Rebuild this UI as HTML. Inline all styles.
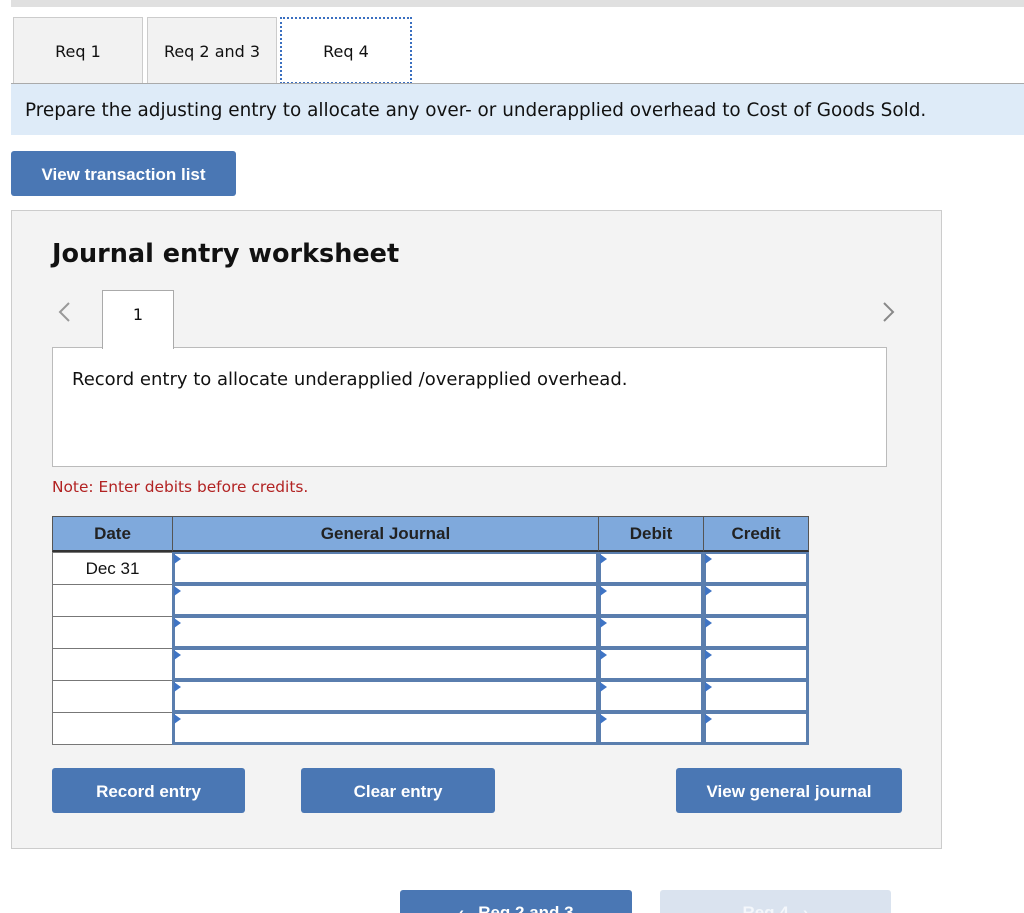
<!DOCTYPE html>
<html><head><meta charset="utf-8"><style>
*{box-sizing:border-box;margin:0;padding:0}
html,body{width:1024px;height:913px;overflow:hidden}
body{background:#fff;position:relative;font-family:"DejaVu Sans","Liberation Sans",sans-serif;color:#111}
.a{position:absolute}
.tab{position:absolute;top:17px;height:66px;width:130px;background:#f2f2f2;border:1px solid #ccc;border-bottom:none;font-size:16px;display:flex;align-items:center;justify-content:center;padding-top:2px}
.btn{position:absolute;background:#4a77b4;color:#fff;font-family:"Liberation Sans",sans-serif;font-weight:bold;font-size:17px;display:flex;align-items:center;justify-content:center;border-radius:3px;padding-top:2px}
.hd{position:absolute;top:516px;height:36px;background:#7fa9dc;border:1px solid #555;border-bottom:2px solid #333;font-family:"Liberation Sans",sans-serif;font-weight:bold;font-size:17px;display:flex;align-items:center;justify-content:center;color:#222}
.dc{position:absolute;left:52px;width:121px;height:33px;background:#fff;border:1px solid #777;font-family:"Liberation Sans",sans-serif;font-size:17px;display:flex;align-items:center;justify-content:center}
.in{position:absolute;height:33px;background:#fff;border:3px solid #5a7eae;border-top-width:2px}
.in:before{content:"";position:absolute;left:-1px;top:0;border-left:7px solid #3f74c4;border-top:5px solid transparent;border-bottom:5px solid transparent}
</style></head><body>
<div class="a" style="left:11px;top:0;width:1013px;height:7px;background:#e0e0e0"></div>
<div class="tab" style="left:13px">Req 1</div>
<div class="tab" style="left:147px">Req 2 and 3</div>
<div class="tab" style="left:280px;width:132px;height:67px;background:#fff;border:2px dotted #3a6fc0">Req 4</div>
<div class="a" style="left:11px;top:83px;width:1013px;height:1px;background:#aaa"></div>
<div class="a" style="left:11px;top:84px;width:1013px;height:51px;background:#deebf8;font-size:18.4px;padding:16px 0 0 14px;white-space:nowrap">Prepare the adjusting entry to allocate any over- or underapplied overhead to Cost of Goods Sold.</div>
<div class="btn" style="left:11px;top:151px;width:225px;height:45px">View transaction list</div>
<div class="a" style="left:11px;top:210px;width:931px;height:639px;background:#f3f3f3;border:1px solid #ccc"></div>
<div class="a" style="left:52px;top:239px;font-size:25.5px;font-weight:bold;color:#111">Journal entry worksheet</div>
<svg class="a" style="left:55px;top:300px" width="20" height="24"><path d="M14 3 L5 12 L14 21" stroke="#999" stroke-width="2" fill="none"/></svg>
<svg class="a" style="left:878px;top:300px" width="20" height="24"><path d="M6 3 L15 12 L6 21" stroke="#888" stroke-width="2" fill="none"/></svg>
<div class="a" style="left:52px;top:347px;width:835px;height:120px;background:#fff;border:1px solid #bbb"></div>
<div class="a" style="left:102px;top:290px;width:72px;height:59px;background:#fff;border:1px solid #aaa;border-bottom:none;font-size:16px;text-align:center;padding-top:14px">1</div>
<div class="a" style="left:72px;top:369px;font-size:18px;white-space:nowrap">Record entry to allocate underapplied /overapplied overhead.</div>
<div class="a" style="left:52px;top:478px;font-size:15.4px;color:#b22222;white-space:nowrap">Note: Enter debits before credits.</div>
<div class="hd" style="left:52px;width:121px">Date</div>
<div class="hd" style="left:172px;width:427px">General Journal</div>
<div class="hd" style="left:598px;width:106px">Debit</div>
<div class="hd" style="left:703px;width:106px">Credit</div>
<div class="dc" style="top:552px">Dec 31</div>
<div class="dc" style="top:584px"></div>
<div class="dc" style="top:616px"></div>
<div class="dc" style="top:648px"></div>
<div class="dc" style="top:680px"></div>
<div class="dc" style="top:712px"></div>
<div class="in" style="left:172px;top:552px;width:427px"></div><div class="in" style="left:598px;top:552px;width:106px"></div><div class="in" style="left:703px;top:552px;width:106px"></div>
<div class="in" style="left:172px;top:584px;width:427px"></div><div class="in" style="left:598px;top:584px;width:106px"></div><div class="in" style="left:703px;top:584px;width:106px"></div>
<div class="in" style="left:172px;top:616px;width:427px"></div><div class="in" style="left:598px;top:616px;width:106px"></div><div class="in" style="left:703px;top:616px;width:106px"></div>
<div class="in" style="left:172px;top:648px;width:427px"></div><div class="in" style="left:598px;top:648px;width:106px"></div><div class="in" style="left:703px;top:648px;width:106px"></div>
<div class="in" style="left:172px;top:680px;width:427px"></div><div class="in" style="left:598px;top:680px;width:106px"></div><div class="in" style="left:703px;top:680px;width:106px"></div>
<div class="in" style="left:172px;top:712px;width:427px"></div><div class="in" style="left:598px;top:712px;width:106px"></div><div class="in" style="left:703px;top:712px;width:106px"></div>
<div class="btn" style="left:52px;top:768px;width:193px;height:45px">Record entry</div>
<div class="btn" style="left:301px;top:768px;width:194px;height:45px">Clear entry</div>
<div class="btn" style="left:676px;top:768px;width:226px;height:45px">View general journal</div>
<div class="btn" style="left:400px;top:890px;width:232px;height:23px;border-radius:3px 3px 0 0;align-items:flex-start;padding-top:13px;overflow:hidden">&lsaquo;&nbsp;&nbsp;&nbsp;Req 2 and 3</div>
<div class="btn" style="left:660px;top:890px;width:231px;height:23px;border-radius:3px 3px 0 0;background:#dae3ef;color:#f4f7fb;align-items:flex-start;padding-top:13px;overflow:hidden">Req 4&nbsp;&nbsp;&nbsp;&rsaquo;</div>
</body></html>
